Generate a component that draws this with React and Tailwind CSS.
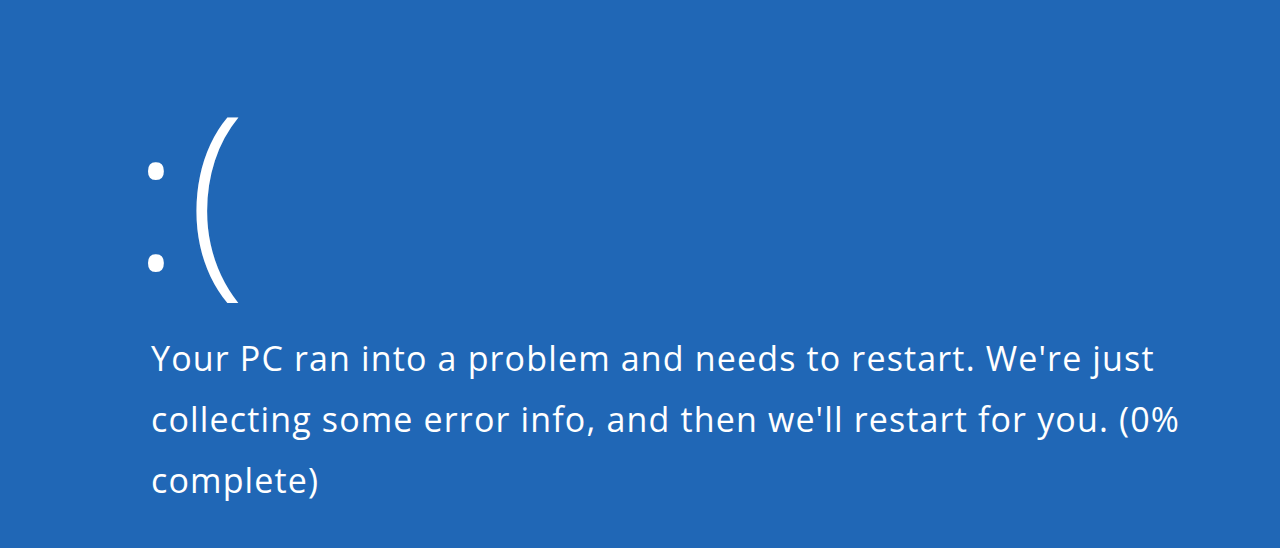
export default function App() {
  return (
    <div
      className="w-[1280px] h-[548px] overflow-hidden bg-[#2067b6] text-white"
      style={{ fontFamily: '"Open Sans", "Noto Sans", sans-serif' }}
    >
      <div className="pl-[132px] pt-[43px]">
        <div className="flex items-end h-[250px] leading-none">
          <span className="text-[200px] font-light">:</span>
          <span className="ml-[8px] text-[212px] font-light">(</span>
        </div>
        <p className="mt-[35px] pl-[19px] w-[1090px] text-[34px] leading-[61px] font-normal tracking-[1.15px]">
          Your PC ran into a problem and needs to restart. We&apos;re just collecting some error info, and then we&apos;ll restart for you. (0% complete)
        </p>
      </div>
    </div>
  );
}
